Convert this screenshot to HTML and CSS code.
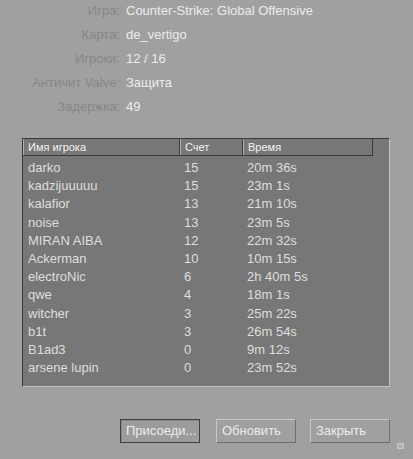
FILE: index.html
```html
<!DOCTYPE html>
<html>
<head>
<meta charset="utf-8">
<link rel="stylesheet" href="styles.css">
</head>
<body>
<div class="win">
  <div class="info">
    <div class="irow"><span class="lbl">Игра:</span><span class="val">Counter-Strike: Global Offensive</span></div>
    <div class="irow"><span class="lbl">Карта:</span><span class="val">de_vertigo</span></div>
    <div class="irow"><span class="lbl">Игроки:</span><span class="val">12 / 16</span></div>
    <div class="irow"><span class="lbl">Античит Valve:</span><span class="val">Защита</span></div>
    <div class="irow"><span class="lbl">Задержка:</span><span class="val">49</span></div>
  </div>
  <div class="list">
    <div class="head">
      <div class="hc c1">Имя игрока</div>
      <div class="hc c2">Счет</div>
      <div class="hc c3">Время</div>
    </div>
    <div class="rows">
      <div class="row"><span class="c1">darko</span><span class="c2">15</span><span class="c3">20m 36s</span></div>
      <div class="row"><span class="c1">kadzijuuuuu</span><span class="c2">15</span><span class="c3">23m 1s</span></div>
      <div class="row"><span class="c1">kalafior</span><span class="c2">13</span><span class="c3">21m 10s</span></div>
      <div class="row"><span class="c1">noise</span><span class="c2">13</span><span class="c3">23m 5s</span></div>
      <div class="row"><span class="c1">MIRAN AIBA</span><span class="c2">12</span><span class="c3">22m 32s</span></div>
      <div class="row"><span class="c1">Ackerman</span><span class="c2">10</span><span class="c3">10m 15s</span></div>
      <div class="row"><span class="c1">electroNic</span><span class="c2">6</span><span class="c3">2h 40m 5s</span></div>
      <div class="row"><span class="c1">qwe</span><span class="c2">4</span><span class="c3">18m 1s</span></div>
      <div class="row"><span class="c1">witcher</span><span class="c2">3</span><span class="c3">25m 22s</span></div>
      <div class="row"><span class="c1">b1t</span><span class="c2">3</span><span class="c3">26m 54s</span></div>
      <div class="row"><span class="c1">B1ad3</span><span class="c2">0</span><span class="c3">9m 12s</span></div>
      <div class="row"><span class="c1">arsene lupin</span><span class="c2">0</span><span class="c3">23m 52s</span></div>
    </div>
  </div>
  <div class="buttons">
    <div class="btn def">Присоеди...</div>
    <div class="btn b2">Обновить</div>
    <div class="btn b3">Закрыть</div>
  </div>
  <div class="grip"></div>
</div>
</body>
</html>
```
FILE: styles.css
```css
html, body {
  margin: 0;
  padding: 0;
  background: #a0a0a0;
}
body {
  font-family: "Liberation Sans", Arial, sans-serif;
  width: 413px;
  height: 459px;
  overflow: hidden;
}
.win {
  position: relative;
  width: 413px;
  height: 459px;
}
.info {
  margin-top: -1px;
  display: flex;
  flex-direction: column;
}
.irow {
  display: flex;
  height: 24px;
  line-height: 24px;
  font-size: 13px;
}
.lbl {
  width: 126px;
  text-align: right;
  color: #878787;
  padding-right: 6px;
  box-sizing: border-box;
  flex: none;
}
.val {
  color: #ececec;
}
.list {
  margin: 19px 0 0 22px;
  width: 368px;
  height: 249px;
  box-sizing: border-box;
  background: #777777;
  border-top: 1px solid #3a3a3a;
  border-left: 1px solid #3a3a3a;
  border-right: 1px solid #c4c4c4;
  border-bottom: 1px solid #c4c4c4;
}
.head {
  display: flex;
  height: 17px;
  box-sizing: border-box;
  border-bottom: 1px solid #3a3a3a;
  width: 350px;
}
.hc {
  box-sizing: border-box;
  border-left: 1px solid #b0b0b0;
  border-right: 1px solid #3a3a3a;
  color: #f4f4f4;
  font-size: 11px;
  line-height: 16px;
  padding-left: 4px;
}
.head .c1 { width: 157px; }
.head .c2 { width: 63px; }
.head .c3 { width: 130px; }
.rows {
  padding-top: 3px;
}
.row {
  display: flex;
  height: 18.2px;
  line-height: 18.2px;
  font-size: 13px;
  color: #dedede;
}
.row .c1 { width: 161px; padding-left: 5px; box-sizing: border-box; }
.row .c2 { width: 63px; }
.row .c3 { flex: 1; }
.buttons {
  display: flex;
  justify-content: flex-end;
  padding-right: 23px;
  margin-top: 32px;
}
.btn {
  width: 80px;
  height: 24px;
  box-sizing: border-box;
  font-size: 13px;
  line-height: 22px;
  color: #ececec;
  padding-left: 5px;
  border-top: 1px solid #c8c8c8;
  border-left: 1px solid #c8c8c8;
  border-right: 1px solid #6e6e6e;
  border-bottom: 1px solid #6e6e6e;
}
.btn.def {
  border: 1px solid #404040;
  box-shadow: inset 1px 1px 0 #8a8a8a;
  background: #9c9c9c;
}
.btn.b2 { margin-left: 16px; }
.btn.b3 { margin-left: 14px; }
.grip {
  position: absolute;
  left: 397px;
  top: 444px;
  width: 7px;
  height: 6px;
  box-sizing: border-box;
  border: 1px solid #c6c6c6;
  background: #b4b4b4;
}
```
